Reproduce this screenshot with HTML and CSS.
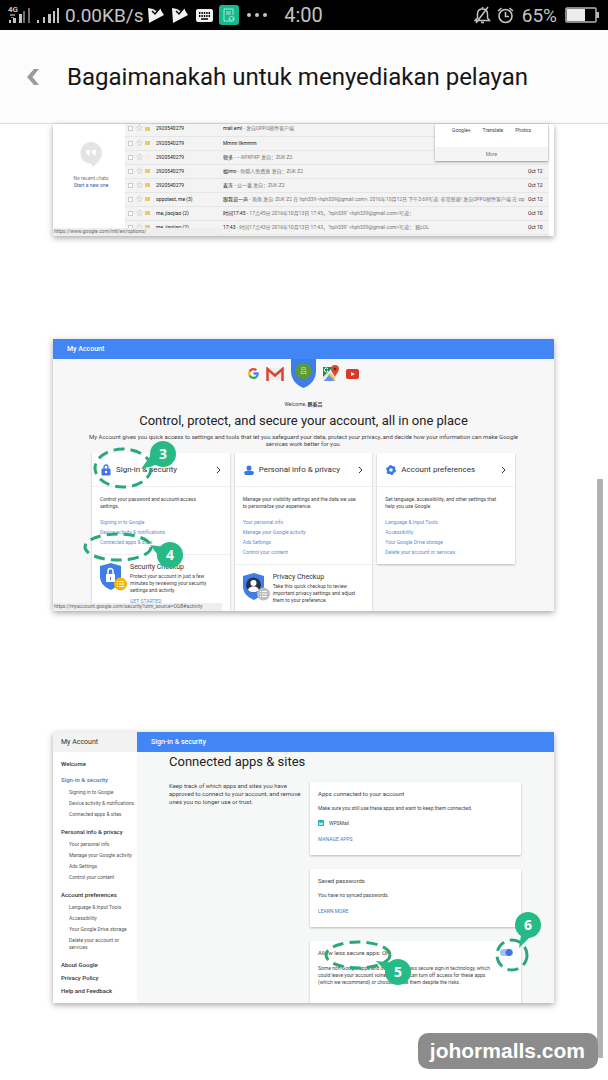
FILE: index.html
```
<!DOCTYPE html>
<html lang="ms">
<head>
    <meta charset="UTF-8">
    <meta name="viewport" content="width=device-width, initial-scale=1.0">
    <title>Bagaimanakah untuk menyediakan pelayan</title>
    <link rel="stylesheet" href="styles.css">
</head>
<body>
    <div class="status-bar">
        <div class="status-left">
            <svg class="signal" width="54" height="20" viewBox="0 0 54 20">
                <text x="0" y="7" class="net">4G</text>
                <g fill="#c4c4c4">
                    <path d="M1 15h2v3h-2zM5 13h3v5h-3zM11 9h3v9h-3zM29 15h2v3h-2zM35 12h2v6h-2zM40 9h3v9h-3zM45 6h2v12h-2zM49 3h2v15h-2z"/>
                    <path d="M2 9h5v2h-5zM3 12h3v1h-3z" fill="#777"/>
                    <path d="M15 6h2v12h-2zM20 3h2v15h-2z" fill="#6e6e6e"/>
                </g>
            </svg>
            <span class="speed">0.00KB/s</span>
            <svg class="play" width="16" height="16" viewBox="0 0 16 16"><path d="M0 1L5 2L8 4L12 1L14 5L16 8L1 16Z" fill="#f2f2f2"/><path d="M4 4L7 7L12 1" stroke="#000" stroke-width="1.500" fill="none"/></svg>
            <svg class="play" width="16" height="16" viewBox="0 0 16 16"><path d="M0 1L5 2L8 4L12 1L14 5L16 8L1 16Z" fill="#f2f2f2"/><path d="M4 4L7 7L12 1" stroke="#000" stroke-width="1.500" fill="none"/></svg>
            <svg class="keyboard" width="17" height="13" viewBox="0 0 17 13">
                <rect width="17" height="13" rx="2" fill="#f2f2f2"/>
                <path d="M3 4h11M3 7h11" stroke="#000" stroke-width="2" stroke-dasharray="1.4 1"/>
                <path d="M5 10h7" stroke="#000" stroke-width="1.5"/>
            </svg>
            <svg class="note" width="20" height="20" viewBox="0 0 20 20">
                <rect width="20" height="20" rx="3" fill="#17b890"/>
                <path d="M14 10V4H5V16H10M7 7h5M7 9h5" stroke="#a5ead6" fill="none"/>
                <circle cx="12.500" cy="14" r="2.500" stroke="#a5ead6" fill="none"/>
                <path d="M11 14l1.500 1.500 3-3" stroke="#a5ead6" fill="none"/>
            </svg>
            <svg width="20" height="4" viewBox="0 0 20 4" fill="#c4c4c4"><circle cx="2" cy="2" r="2"/><circle cx="10" cy="2" r="2"/><circle cx="18" cy="2" r="2"/></svg>
        </div>
        <span class="clock">4:00</span>
        <div class="status-right">
            <svg width="17" height="18" viewBox="0 0 17 18" fill="none" stroke="#c4c4c4" stroke-width="1.500">
                <path d="M1 14.500H15.500L13.500 12V8C13.500 5 11.500 3 8.500 3S3.500 5 3.500 8V12ZM7 16.500h3M8.500 1v2M2 17L14 1"/>
            </svg>
            <svg class="alarm" width="17" height="17" viewBox="0 0 17 17" fill="none" stroke="#c4c4c4" stroke-width="1.600">
                <circle cx="8.500" cy="9" r="6.500"/>
                <path d="M8.500 5v4.500h3.500M1 4L4.500 1M16 4L12.500 1"/>
            </svg>
            <span class="percent">65%</span>
            <svg width="34" height="16" viewBox="0 0 34 16">
                <rect x="1" y="1" width="30" height="14" rx="1" fill="none" stroke="#b5b5b5" stroke-width="1.500"/>
                <rect x="2" y="2" width="18" height="12" fill="#ececec"/>
                <path d="M31 5h3v6h-3z" fill="#b5b5b5"/>
            </svg>
        </div>
    </div>

    <header class="app-header">
        <button class="back" aria-label="Kembali">
            <svg width="14" height="18" viewBox="0 0 14 18"><path d="M8 1h5L6.500 9L13 17H8L1 9Z" fill="#9b9b9b"/></svg>
        </button>
        <h1>Bagaimanakah untuk menyediakan pelayan</h1>
    </header>

    <main class="steps">
        <section class="shot mail">
            <aside class="chats">
                <svg width="22" height="25" viewBox="0 0 22 25">
                    <path d="M11 0a11 11 0 0 1 11 11c0 6-5 11-10 14v-3A11 11 0 1 1 11 0" fill="#e4e4e4"/>
                    <path d="M6 8h4v4l-2 2v-2h-2zM12 8h4v4l-2 2v-2h-2z" fill="#fff"/>
                </svg>
                <p>No recent chats</p>
                <a href="#">Start a new one</a>
            </aside>
            <div class="inbox">
                <table>
                    <tbody>
                        <tr><td class="c-check"><input type="checkbox" aria-label="Select"></td><td class="c-star">☆</td><td class="c-tag"><i></i></td><td class="c-from">2920540279</td><td><b>mail eml</b> - 发自OPPO邮件客户端</td><td class="c-date"></td></tr>
                        <tr><td class="c-check"><input type="checkbox" aria-label="Select"></td><td class="c-star">☆</td><td class="c-tag"><i></i></td><td class="c-from">2920540279</td><td><b>Mmnn llkmmm</b></td><td class="c-date"></td></tr>
                        <tr><td class="c-check"><input type="checkbox" aria-label="Select"></td><td class="c-star">☆</td><td class="c-tag"><i class="off"></i></td><td class="c-from">2920540279</td><td><b>顿多</b> - ---XPXPXP 发自：ZUK Z2</td><td class="c-date"></td></tr>
                        <tr><td class="c-check"><input type="checkbox" aria-label="Select"></td><td class="c-star">☆</td><td class="c-tag"><i></i></td><td class="c-from">2920540279</td><td><b>蝠imo</b> - 你哦人免费意 发自：ZUK Z2</td><td class="c-date">Oct 12</td></tr>
                        <tr><td class="c-check"><input type="checkbox" aria-label="Select"></td><td class="c-star">☆</td><td class="c-tag"><i></i></td><td class="c-from">2920540279</td><td><b>麦冻</b> - 公一番 发自：ZUK Z2</td><td class="c-date">Oct 12</td></tr>
                        <tr><td class="c-check"><input type="checkbox" aria-label="Select"></td><td class="c-star">☆</td><td class="c-tag"><i></i></td><td class="c-from">oppotest, me (3)</td><td><b>跟我说一声</b> - 角角 发自: ZUK Z2 在 hph339 &lt;hph339@gmail.com&gt;, 2016年10月12日 下午3:69写道: 非常感谢! 发自OPPO邮件客户端 在 op</td><td class="c-date">Oct 12</td></tr>
                        <tr><td class="c-check"><input type="checkbox" aria-label="Select"></td><td class="c-star">☆</td><td class="c-tag"><i></i></td><td class="c-from">me, jiaojiao (2)</td><td><b>时间17:45</b> - 17点45分 2016年10月13日 17:45，"hph339" &lt;hph339@gmail.com&gt;写道：</td><td class="c-date">Oct 10</td></tr>
                        <tr><td class="c-check"><input type="checkbox" aria-label="Select"></td><td class="c-star">☆</td><td class="c-tag"><i></i></td><td class="c-from">me, jiaojiao (2)</td><td><b>17:43</b> - 时间17点43分 2016年10月13日 17:43，"hph339" &lt;hph339@gmail.com&gt;写道： 稿LOL</td><td class="c-date">Oct 10</td></tr>
                    </tbody>
                </table>
            </div>
            <div class="apps-menu">
                <div class="apps"><a href="#">Google+</a><a href="#">Translate</a><a href="#">Photos</a></div>
                <a class="more" href="#">More</a>
            </div>
            <div class="link-hint">https://www.google.com/intl/en/options/</div>
        </section>

        <section class="shot account">
            <div class="blue-bar">My Account</div>
            <div class="products">
                <svg width="11" height="11" viewBox="0 0 48 48">
                    <path fill="#ea4335" d="M24 10c4 0 7 1 9 3l7-7C36 2 30 0 24 0 15 0 7 5 3 13l8 6c2-6 7-9 13-9z"/>
                    <path fill="#4285f4" d="M47 24c0-2 0-3-1-5H24v10h13c-1 3-2 5-5 7l8 6c4-4 7-10 7-18z"/>
                    <path fill="#fbbc05" d="M11 29c-1-3-1-7 0-10l-8-6c-4 7-4 15 0 22z"/>
                    <path fill="#34a853" d="M24 48c6 0 12-2 16-6l-8-6c-6 4-17 3-21-7l-8 6c4 8 12 13 21 13z"/>
                </svg>
                <svg width="18" height="14" viewBox="0 0 18 14">
                    <path d="M2 1h14v12H2z" fill="#eee"/>
                    <path d="M2 13L9 7l7 6" fill="none" stroke="#ddd"/>
                    <path d="M1.500 14V2L9 8.500L16.500 2V14" fill="none" stroke="#db4437" stroke-width="2.500"/>
                </svg>
                <svg class="shield" width="25" height="29" viewBox="0 0 25 29">
                    <path d="M0 0h25v12c0 8-5 14-12.500 17C5 26 0 20 0 12z" fill="#3f7de8"/>
                    <circle cx="12.500" cy="12" r="8" fill="#5c9a32"/>
                    <text x="9" y="14" class="avatar">吕</text>
                </svg>
                <svg width="16" height="17" viewBox="0 0 16 17">
                    <path d="M0 2h13v14H0z" fill="#188b52"/>
                    <path d="M0 12L9 3l4 4v9H0z" fill="#e8e8e8"/>
                    <path d="M7 8L12 13L10 16L5 10Z" fill="#f5c52c"/>
                    <path d="M1 16l5-6 6 6z" fill="#5b93ef"/>
                    <path d="M12 12C11 9 8 7 8 4a4 4 0 0 1 8 0c0 3-3 5-4 8z" fill="#df4b38"/>
                    <circle cx="12" cy="4" r="1.500" fill="#7b231e"/>
                    <path d="M5 4a2 2 0 1 0 0 2H4" fill="none" stroke="#fff"/>
                </svg>
                <svg width="13" height="10" viewBox="0 0 13 10"><rect width="13" height="10" rx="2" fill="#dd3725"/><path d="M5 3v4l4-2z" fill="#fff"/></svg>
            </div>
            <p class="welcome">Welcome, <b>鹏奚吕</b></p>
            <h2>Control, protect, and secure your account, all in one place</h2>
            <p class="intro">My Account gives you quick access to settings and tools that let you safeguard your data, protect your privacy, and decide how your information can make Google services work better for you.</p>
            <div class="cards">
                <article class="card">
                    <h3>
                        <svg width="10" height="12" viewBox="0 0 10 12"><path d="M1 5h8v6H1z" fill="#3b78e7" stroke="#3b78e7"/><path d="M3 5V3a2 2 0 0 1 4 0v2" fill="none" stroke="#3b78e7" stroke-width="1.300"/><circle cx="5" cy="8" r="1.200" fill="#fff"/></svg>
                        <span>Sign-in &amp; security</span>
                        <svg class="chev" width="5" height="8" viewBox="0 0 5 8"><path d="M1 1l3 3-3 3"/></svg>
                    </h3>
                    <div class="card-body">
                        <p>Control your password and account-access settings.</p>
                        <a href="#">Signing in to Google</a>
                        <a href="#">Device activity &amp; notifications</a>
                        <a href="#">Connected apps &amp; sites</a>
                    </div>
                    <div class="checkup">
                        <svg width="27" height="29" viewBox="0 0 27 29">
                            <path d="M0 3L11 0l10 3v10c0 7-4 11-10 14C4 24 0 20 0 13z" fill="#3f7de8"/>
                            <path d="M6 11h9v8H6z" fill="#fff"/><path d="M8 11V8a2.500 2.500 0 0 1 5 0v3" fill="none" stroke="#fff" stroke-width="1.500"/><path d="M10 14h1v3h-1z" fill="#3f7de8"/>
                            <circle cx="20.500" cy="21" r="6.500" fill="#f2b50f"/><path d="M17 18.500h1M19 18.500h5M17 21h1M19 21h5M17 23.500h1M19 23.500h5" stroke="#fff"/>
                        </svg>
                        <div>
                            <h4>Security Checkup</h4>
                            <p>Protect your account in just a few minutes by reviewing your security settings and activity.</p>
                            <a href="#">GET STARTED</a>
                        </div>
                    </div>
                </article>
                <article class="card">
                    <h3>
                        <svg width="10" height="12" viewBox="0 0 10 12" fill="#3b78e7"><circle cx="5" cy="4" r="2.500"/><path d="M0 8c3-2 7-2 10 0l-1 3H1z"/></svg>
                        <span>Personal info &amp; privacy</span>
                        <svg class="chev" width="5" height="8" viewBox="0 0 5 8"><path d="M1 1l3 3-3 3"/></svg>
                    </h3>
                    <div class="card-body">
                        <p>Manage your visibility settings and the data we use to personalize your experience.</p>
                        <a href="#">Your personal info</a>
                        <a href="#">Manage your Google activity</a>
                        <a href="#">Ads Settings</a>
                        <a href="#">Control your content</a>
                    </div>
                    <div class="checkup">
                        <svg width="27" height="29" viewBox="0 0 27 29">
                            <path d="M0 3L11 0l10 3v10c0 7-4 11-10 14C4 24 0 20 0 13z" fill="#3f7de8"/>
                            <circle cx="10.500" cy="12" r="7.500" fill="#24344f"/><circle cx="10.500" cy="10" r="3" fill="#fff"/><path d="M5 17c2-5 9-5 11 0-3 3-8 3-11 0" fill="#fff"/>
                            <circle cx="20.500" cy="21" r="6.500" fill="#bdbdbd"/><path d="M17 18.500h1M19 18.500h5M17 21h1M19 21h5M17 23.500h1M19 23.500h5" stroke="#fff"/>
                        </svg>
                        <div>
                            <h4>Privacy Checkup</h4>
                            <p>Take this quick checkup to review important privacy settings and adjust them to your preference.</p>
                        </div>
                    </div>
                </article>
                <article class="card short">
                    <h3>
                        <svg width="10" height="12" viewBox="0 0 10 12"><circle cx="5" cy="6" r="3" fill="none" stroke="#3b78e7" stroke-width="2.500"/><circle cx="5" cy="6" r="4.200" fill="none" stroke="#3b78e7" stroke-width="1.600" stroke-dasharray="2.200"/></svg>
                        <span>Account preferences</span>
                        <svg class="chev" width="5" height="8" viewBox="0 0 5 8"><path d="M1 1l3 3-3 3"/></svg>
                    </h3>
                    <div class="card-body">
                        <p>Set language, accessibility, and other settings that help you use Google.</p>
                        <a href="#">Language &amp; Input Tools</a>
                        <a href="#">Accessibility</a>
                        <a href="#">Your Google Drive storage</a>
                        <a href="#">Delete your account or services</a>
                    </div>
                </article>
            </div>
            <div class="link-hint">https://myaccount.google.com/security?utm_source=OGB#activity</div>
            <svg class="marks" width="501" height="272" viewBox="0 0 501 272">
                <ellipse cx="70" cy="129" rx="28" ry="19"/>
                <ellipse cx="65" cy="208" rx="33" ry="13"/>
                <path d="M88 130L101 112L110 124ZM97 206L112 208L108 220Z"/>
            </svg>
            <span class="badge b3">3</span>
            <span class="badge b4">4</span>
        </section>

        <section class="shot security">
            <nav class="side">
                <div class="side-title">My Account</div>
                <a class="top" href="#">Welcome</a>
                <a class="top current" href="#">Sign-in &amp; security</a>
                <ul>
                    <li><a href="#">Signing in to Google</a></li>
                    <li><a href="#">Device activity &amp; notifications</a></li>
                    <li><a href="#">Connected apps &amp; sites</a></li>
                </ul>
                <a class="top" href="#">Personal info &amp; privacy</a>
                <ul>
                    <li><a href="#">Your personal info</a></li>
                    <li><a href="#">Manage your Google activity</a></li>
                    <li><a href="#">Ads Settings</a></li>
                    <li><a href="#">Control your content</a></li>
                </ul>
                <a class="top" href="#">Account preferences</a>
                <ul>
                    <li><a href="#">Language &amp; Input Tools</a></li>
                    <li><a href="#">Accessibility</a></li>
                    <li><a href="#">Your Google Drive storage</a></li>
                    <li><a href="#">Delete your account or services</a></li>
                </ul>
                <a class="foot" href="#">About Google</a>
                <a class="foot" href="#">Privacy Policy</a>
                <a class="foot" href="#">Help and Feedback</a>
            </nav>
            <div class="pane">
                <div class="blue-bar">Sign-in &amp; security</div>
                <h2>Connected apps &amp; sites</h2>
                <div class="pane-cols">
                    <p class="lead">Keep track of which apps and sites you have approved to connect to your account, and remove ones you no longer use or trust.</p>
                    <div class="boxes">
                        <div class="box">
                            <h3>Apps connected to your account</h3>
                            <p>Make sure you still use these apps and want to keep them connected.</p>
                            <p class="app"><svg width="6" height="6" viewBox="0 0 6 6"><rect width="6" height="6" rx="1" fill="#1ab3b6"/><path d="M1 2l2 1 2-1v3H1z" fill="#a9eeee"/></svg>WPSMail</p>
                            <a href="#">MANAGE APPS</a>
                        </div>
                        <div class="box">
                            <h3>Saved passwords</h3>
                            <p>You have no synced passwords.</p>
                            <a href="#">LEARN MORE</a>
                        </div>
                        <div class="box last">
                            <div class="toggle-row">
                                <label for="less-secure">Allow less secure apps: ON</label>
                                <input type="checkbox" id="less-secure" checked>
                            </div>
                            <p>Some non-Google apps and devices use less secure sign-in technology, which could leave your account vulnerable. You can turn off access for these apps (which we recommend) or choose to use them despite the risks.</p>
                        </div>
                    </div>
                </div>
            </div>
            <svg class="marks" width="501" height="271" viewBox="0 0 501 271">
                <ellipse cx="305" cy="223" rx="32" ry="13"/>
                <circle cx="459" cy="223" r="15"/>
                <path d="M323 229L343 231L337 243ZM466 216L468 203L478 204Z"/>
            </svg>
            <span class="badge b5">5</span>
            <span class="badge b6">6</span>
        </section>
    </main>

    <div class="scroll-thumb"></div>
    <div class="watermark">johormalls.com</div>
</body>
</html>
```
FILE: styles.css
```
* {
    box-sizing: border-box;
}
body {
    margin: 0;
    min-height: 100vh;
    position: relative;
    background: #fff;
    color: #444;
    font-family: Roboto, "Noto Sans CJK SC", sans-serif;
}
h1, h2, h3, h4, p, ul {
    margin: 0;
    padding: 0;
    font-weight: 400;
}
a {
    text-decoration: none;
    color: #5b8fd6;
}
svg {
    display: block;
    flex: none;
}

/* phone status bar */
.status-bar {
    display: flex;
    align-items: center;
    height: 30px;
    padding: 0 9px 0 8px;
    background: #000;
    color: #c4c4c4;
    font-size: 20px;
}
.status-left, .status-right {
    display: flex;
    flex: 1;
    align-items: center;
    font-size: 19px;
}
.status-right {
    justify-content: flex-end;
}
.signal {
    margin-right: 3px;
}
.net {
    font-size: 8px;
    font-weight: 700;
    fill: #c4c4c4;
}
.speed {
    margin-right: 5px;
}
.play {
    margin-right: 8px;
}
.keyboard {
    margin-right: 6px;
}
.note {
    margin-right: 8px;
}
.alarm {
    margin: 0 8px 0 6px;
}
.percent {
    margin-right: 8px;
}

.app-header {
    display: flex;
    align-items: center;
    height: 94px;
    padding: 0 26px;
    background: #fcfcfc;
    border-bottom: 1px solid #ddd;
    color: #161616;
}
.back {
    padding: 0;
    margin-right: 27px;
    border: none;
    background: none;
}
.app-header h1 {
    font-size: 24px;
    white-space: nowrap;
}

/* screenshots of the steps */
.steps {
    padding: 0 54px 77px 53px;
}
.shot {
    position: relative;
    background: #f7f7f7;
    font-size: 5px;
    line-height: 7px;
    box-shadow: 0 2px 6px rgba(0, 0, 0, 0.35);
}
.link-hint {
    position: absolute;
    left: 0;
    bottom: 0;
    width: 169px;
    height: 8px;
    padding-left: 1px;
    background: #eee;
    color: #666;
    white-space: nowrap;
}

.mail {
    display: flex;
    height: 112px;
    background: #fff;
    color: #777;
}
.chats {
    display: flex;
    flex-direction: column;
    align-items: center;
    width: 72px;
    padding: 18px 0 0 4px;
}
.chats p {
    margin-top: 8px;
}
.chats a {
    color: #4758a8;
}
.inbox {
    flex: 1;
    min-width: 0;
    overflow: hidden;
    margin-right: 5px;
    background: #f3f3f3;
}
.inbox table {
    width: 100%;
    margin-top: -2px;
    table-layout: fixed;
    border-collapse: collapse;
}
.inbox td {
    height: 14px;
    padding: 0;
    border-bottom: 1px solid #e6e6e6;
    overflow: hidden;
    white-space: nowrap;
}
.inbox b, .c-date {
    font-weight: 400;
    color: #222;
}
.inbox input {
    appearance: none;
    display: block;
    width: 5px;
    height: 5px;
    margin: 0 0 0 3px;
    border: 1px solid #ccc;
    background: #fff;
}
.inbox .c-check {
    width: 11px;
}
.inbox .c-star {
    width: 9px;
    color: #aaa;
    font-size: 7px;
}
.inbox .c-tag {
    width: 11px;
}
.c-tag i {
    display: block;
    width: 5px;
    height: 4px;
    background: #eccb62;
}
.c-tag i.off {
    background: #f6efd9;
}
.inbox .c-from {
    width: 67px;
    color: #222;
}
.inbox .c-date {
    width: 21px;
}
.apps-menu {
    position: absolute;
    top: 0;
    right: 6px;
    width: 113px;
    height: 37px;
    background: #fff;
    box-shadow: 0 1px 2px rgba(0, 0, 0, 0.4);
    text-align: center;
}
.apps-menu a {
    color: #444;
}
.apps {
    display: flex;
    justify-content: space-between;
    height: 23px;
    padding: 3px 17px 0;
}
.apps-menu .more {
    display: block;
    height: 14px;
    line-height: 14px;
    background: #f5f5f5;
    color: #777;
}

.blue-bar {
    height: 20px;
    padding-left: 14px;
    background: #4285f4;
    color: #fff;
    font-size: 7px;
    font-weight: 500;
    line-height: 20px;
}

.account {
    height: 272px;
    margin-top: 103px;
    display: flex;
    flex-direction: column;
}
.account .blue-bar {
    flex: none;
}
.products {
    display: flex;
    justify-content: center;
    align-items: center;
    gap: 7px;
    height: 29px;
}
.avatar {
    font-size: 7px;
    fill: #dbe9cd;
}
.welcome {
    margin-top: 13px;
    text-align: center;
}
.account h2 {
    margin-top: 5px;
    font-size: 13px;
    line-height: 16px;
    text-align: center;
    color: #222;
}
.intro {
    padding: 0 34px;
    margin: 4px 0 6px;
    font-size: 6px;
    text-align: center;
}
.cards {
    display: grid;
    grid-template-columns: repeat(3, 1fr);
    gap: 5px;
    flex: 1;
    min-height: 0;
    padding: 0 39px;
    overflow: hidden;
}
.card {
    background: #fff;
    box-shadow: 0 1px 2px rgba(0, 0, 0, 0.25);
}
.card.short {
    align-self: start;
}
.card h3 {
    display: flex;
    align-items: center;
    gap: 5px;
    height: 34px;
    padding: 0 9px;
    border-bottom: 1px solid #eee;
    color: #333;
    font-size: 8px;
}
.card h3 span {
    flex: 1;
    white-space: nowrap;
}
.chev {
    fill: none;
    stroke: #333;
}
.card-body {
    padding: 9px 8px 7px;
}
.card-body p {
    max-width: 114px;
    margin-bottom: 7px;
}
.card-body a {
    display: block;
    line-height: 10px;
}
.checkup {
    display: flex;
    gap: 3px;
    padding: 8px 8px 0;
    border-top: 1px solid #eee;
}
.checkup h4 {
    margin-bottom: 2px;
    font-size: 7px;
    line-height: 8px;
    color: #333;
}
.checkup a {
    display: block;
    margin-top: 4px;
}

.security {
    display: flex;
    height: 271px;
    margin-top: 121px;
}
.side {
    width: 84px;
    background: #fff;
}
.side a {
    display: block;
    color: #555;
}
.side-title {
    height: 20px;
    margin-bottom: 8px;
    padding-left: 8px;
    background: #f2f2f2;
    color: #333;
    font-size: 7px;
    line-height: 20px;
}
.side .top, .side .foot {
    padding-left: 8px;
    font-size: 6px;
    font-weight: 500;
    color: #333;
}
.side .top + .top {
    margin-top: 9px;
}
.side .current {
    color: #4a76cf;
}
.side ul {
    display: flex;
    flex-direction: column;
    gap: 4px;
    margin: 6px 0 10px;
    padding-left: 16px;
    list-style: none;
    white-space: nowrap;
}
.side li:last-child {
    white-space: normal;
}
.side .foot {
    margin-bottom: 6px;
}
.pane {
    display: flex;
    flex: 1;
    flex-direction: column;
    min-width: 0;
    overflow: hidden;
    background: #f6f8f8;
}
.pane .blue-bar {
    flex: none;
}
.pane h2 {
    padding-left: 32px;
    margin-bottom: 10px;
    font-size: 13px;
    line-height: 20px;
    color: #222;
}
.pane-cols {
    display: grid;
    grid-template-columns: 136px 1fr;
    gap: 5px;
    flex: 1;
    min-height: 0;
    padding: 0 33px 0 32px;
}
.lead {
    font-size: 6px;
    line-height: 8px;
}
.boxes {
    display: flex;
    flex-direction: column;
    gap: 14px;
}
.box {
    padding: 8px 8px 12px;
    background: #fff;
    box-shadow: 0 1px 2px rgba(0, 0, 0, 0.25);
}
.box h3 {
    margin-bottom: 8px;
    font-size: 6px;
}
.box a {
    display: block;
    margin-top: 9px;
    color: #3f7bd0;
}
.box.last {
    flex: 1;
}
.box.last p {
    max-width: 176px;
}
.box .app {
    display: flex;
    gap: 5px;
    margin-top: 8px;
}
.toggle-row {
    display: flex;
    align-items: center;
    justify-content: space-between;
    margin-bottom: 9px;
    font-size: 6px;
}
.toggle-row input {
    appearance: none;
    width: 13px;
    height: 7px;
    margin: 0;
    border-radius: 4px;
    background: radial-gradient(circle at 9px 50%, #3b78e7 3px, #a4c1f4 4px);
}

/* step markers drawn over the screenshots */
.marks {
    position: absolute;
    top: 0;
    left: 0;
    pointer-events: none;
}
.marks ellipse, .marks circle {
    fill: none;
    stroke: #2aa878;
    stroke-width: 3;
    stroke-dasharray: 11 6;
}
.marks path {
    fill: #26bb86;
}
.badge {
    position: absolute;
    width: 26px;
    height: 26px;
    border-radius: 50%;
    background: #26bb86;
    color: #fff;
    font-family: "Open Sans", sans-serif;
    font-size: 14px;
    font-weight: 700;
    line-height: 26px;
    text-align: center;
}
.b3 {
    left: 97px;
    top: 102px;
}
.b4 {
    left: 104px;
    top: 203px;
}
.b5 {
    left: 332px;
    top: 227px;
}
.b6 {
    left: 462px;
    top: 180px;
}

.scroll-thumb {
    position: absolute;
    top: 479px;
    right: 5px;
    width: 6px;
    height: 579px;
    background: #b2b2b2;
}
.watermark {
    position: absolute;
    right: 10px;
    bottom: 11px;
    padding: 0 13px 0 12px;
    border-radius: 10px;
    background: #8c8c8c;
    color: #fff;
    font-family: "Liberation Sans", sans-serif;
    font-size: 21px;
    font-weight: 700;
    line-height: 36px;
}
```
